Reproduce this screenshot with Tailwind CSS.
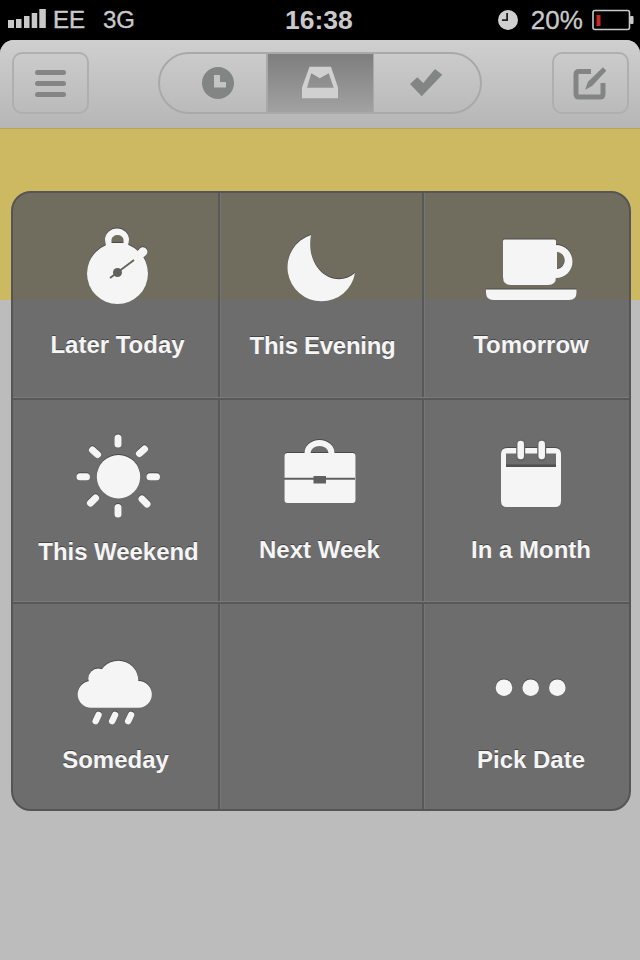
<!DOCTYPE html>
<html>
<head>
<meta charset="utf-8">
<script src="https://cdn.jsdelivr.net/npm/@tailwindcss/browser@4"></script>
</head>
<body class="m-0 bg-black">
<div class="relative w-[640px] h-[960px] overflow-hidden bg-black font-['Liberation_Sans',sans-serif]">
  <!-- status bar -->
  <div class="h-10 flex items-center text-[#c9c9c9]">
    <svg class="ml-2 mt-[-1px]" width="38" height="22" viewBox="8 9 38 22" fill="#c9c9c9"><rect x="8" y="20" width="6" height="8"/><rect x="16" y="19" width="5.500" height="9"/><rect x="24" y="16" width="5.500" height="12"/><rect x="31.700" y="13" width="5.500" height="15"/><rect x="39.300" y="9" width="6.500" height="19"/></svg>
    <span class="ml-[7px] text-[24px] leading-none [-webkit-text-stroke:0.5px_#c9c9c9]">EE</span>
    <span class="ml-[18px] text-[24px] leading-none [-webkit-text-stroke:0.3px_#c9c9c9]">3G</span>
    <span class="ml-[150px] text-[26.500px] font-bold leading-none">16:38</span>
    <svg class="ml-[145px]" width="21" height="21" viewBox="498 9 21 21"><circle cx="508" cy="19" r="10" fill="#d0d0d0"/><path d="M508 12v8h-6v-1.800h4.200V12z" fill="#222"/></svg>
    <span class="ml-[12px] text-[26px] leading-none [-webkit-text-stroke:0.3px_#c9c9c9]">20%</span>
    <svg class="ml-[9px]" width="42" height="22" viewBox="592 8 42 22"><rect x="593" y="9.500" width="36.500" height="19" rx="2" fill="none" stroke="#c9c9c9" stroke-width="1.600"/><rect x="596.500" y="14" width="4" height="11" fill="#c8281e"/><rect x="630" y="15" width="3.500" height="8" rx="1" fill="#c9c9c9"/></svg>
  </div>
  <!-- page -->
  <div class="h-[920px] rounded-t-[14px] overflow-hidden bg-[#bcbcbc]">
    <div class="h-[88px] pl-3 pr-[11px] pb-[2px] flex items-center justify-between bg-gradient-to-b from-[#cfcfcf] to-[#b6b6b6]">
      <div class="w-[77px] h-[62px] rounded-[10px] border-2 border-[#afafaf] flex flex-col items-center justify-center gap-[6px]">
        <div class="w-[31px] h-[5px] rounded-full bg-[#858585]"></div>
        <div class="w-[31px] h-[5px] rounded-full bg-[#858585]"></div>
        <div class="w-[31px] h-[5px] rounded-full bg-[#858585]"></div>
      </div>
      <div class="w-[324px] h-[62px] ml-[-2px] rounded-full border-2 border-[#a9a9a9] overflow-hidden flex">
        <div class="w-[106px] flex items-center justify-center pl-[10px]">
          <svg width="34" height="34" viewBox="201 67 34 34"><circle cx="218" cy="84" r="16" fill="#838584"/><path d="M214 76h6v7h6v5.500h-12z" fill="#c4c4c4"/></svg>
        </div>
        <div class="w-[108px] flex items-center justify-center bg-gradient-to-b from-[#7e7e7e] to-[#a2a2a2] border-l-2 border-r border-x-[#a9a9a9]">
          <svg width="38" height="34" viewBox="301 68 38 34"><path fill-rule="evenodd" d="M309.500 68.700H331L338 89.500V100.300H302V89.500ZM311.300 75.300L307 89.700H333.700L328.700 75.300L319.800 80.300Z" fill="#d0d0d0"/></svg>
        </div>
        <div class="flex-1 flex items-center justify-center pr-[2px]">
          <svg width="34" height="30" viewBox="409 70 34 30"><path d="M410 86L417.300 79.300L423.300 85L435 71L442.300 76.700L421.700 98.300Z" fill="#838584"/></svg>
        </div>
      </div>
      <div class="w-[77px] h-[62px] rounded-[10px] border-2 border-[#afafaf] flex items-center justify-center">
        <svg width="36" height="36" viewBox="575 65 36 36"><path d="M593 71.500H581q-3 0-3 3V94q0 3 3 3H602q3 0 3-3V83" fill="none" stroke="#838584" stroke-width="5"/><path d="M587 90L590 81.700L605 67.300L608.300 70.700L594.300 85.700Z" fill="#838584"/></svg>
      </div>
    </div>
    <div class="h-[172px] bg-[#cdb962] border-t border-t-[#b8a552]"></div>
  </div>
  <!-- overlay panel -->
  <div class="absolute left-[11px] top-[191px] w-[620px] h-[620px] rounded-[20px] border-2 border-[#555] bg-[#5f5f5f]/85 overflow-hidden flex flex-col text-[#f5f5f5] font-bold text-[24px] [text-shadow:0_-1px_0_#444]">
    <!-- row 1 -->
    <div class="h-[204px] flex">
      <div class="w-[205px] flex flex-col items-center">
        <svg width="205" height="137" viewBox="13 193 205 137"><g class="drop-shadow-[0_-1px_0_#4a4a4a]"><circle cx="117.500" cy="273.500" r="30.500" fill="#f5f5f5"/><path fill-rule="evenodd" d="M105 240a12 11.500 0 1 1 24 0l-1 6h-22zM111.500 243h12v-3a6 5 0 0 0-12 0z" fill="#f5f5f5"/><path d="M136 252.500l3-3a4.500 4.500 0 1 1 7 5.500l-3.500 3z" fill="#f5f5f5"/></g><path d="M110 278l24-18" stroke="#63625a" stroke-width="1.800"/><circle cx="117.500" cy="272.500" r="4.500" fill="#63625a"/></svg>
        <span class="leading-[30px] translate-x-[2px]">Later Today</span>
      </div>
      <div class="w-[3px] border-l-2 border-[#585858] bg-[#767676]"></div>
      <div class="w-[201px] flex flex-col items-center">
        <svg width="201" height="138" viewBox="221 193 201 138"><path class="drop-shadow-[0_-1px_0_#4a4a4a]" d="M311 235A34 34 0 1 0 355 273C335 290 305 270 311 235Z" fill="#f5f5f5"/></svg>
        <span class="leading-[30px] tracking-[-0.3px] translate-x-[1px]">This Evening</span>
      </div>
      <div class="w-[3px] border-l-2 border-[#585858] bg-[#767676]"></div>
      <div class="w-[204px] flex flex-col items-center">
        <svg width="204" height="137" viewBox="425 193 204 137"><g class="drop-shadow-[0_-1px_0_#4a4a4a]" fill="#f5f5f5"><path fill-rule="evenodd" d="M556 245a16.500 16.500 0 0 1 0 33zM557 251.700v17.300a8.700 8.700 0 0 0 0-17.300z"/><path d="M504.500 239.500h50q1.500 0 1.500 1.500v36q0 8-8 8h-37q-8 0-8-8v-36q0-1.500 1.500-1.500z"/><path d="M486 289.500h90.500v3q0 7.500-7.500 7.500h-75.500q-7.500 0-7.500-7.500z"/></g></svg>
        <span class="leading-[30px] translate-x-[4px]">Tomorrow</span>
      </div>
    </div>
    <div class="h-[3px] shrink-0 border-t border-t-[#7a7a7a] bg-[#585858]"></div>
    <!-- row 2 -->
    <div class="h-[201px] flex">
      <div class="w-[205px] flex flex-col items-center">
        <svg width="205" height="137" viewBox="13 400 205 137"><g class="drop-shadow-[0_-1px_0_#4a4a4a]"><circle cx="118.500" cy="476.700" r="21.700" fill="#f5f5f5"/><path d="M118 438v6M118 507.500v6.500M80 476.700h6.500M150 476.700h6.500M92.500 450l5 4.500M139.500 453.500l5-4.500M90.500 503l5-5M142 499l5 5" stroke="#f5f5f5" stroke-width="7" stroke-linecap="round" fill="none"/></g></svg>
        <span class="leading-[30px] translate-x-[3px] tracking-[-0.05px]">This Weekend</span>
      </div>
      <div class="w-[3px] border-l-2 border-[#585858] bg-[#767676]"></div>
      <div class="w-[201px] flex flex-col items-center">
        <svg width="201" height="135" viewBox="221 400 201 135"><g class="drop-shadow-[0_-1px_0_#4a4a4a]"><path fill-rule="evenodd" d="M304.500 453a15 13 0 0 1 30 0h18q3 0 3 3v44q0 3-3 3h-65q-3 0-3-3v-44q0-3 3-3zM310.500 453h18a9 7 0 0 0-18 0z" fill="#f5f5f5"/></g><path d="M284 478.700h71" stroke="#606060" stroke-width="2"/><rect x="313.500" y="476" width="12.500" height="7.500" fill="#606060"/></svg>
        <span class="leading-[30px] translate-x-[-2px]">Next Week</span>
      </div>
      <div class="w-[3px] border-l-2 border-[#585858] bg-[#767676]"></div>
      <div class="w-[204px] flex flex-col items-center">
        <svg width="204" height="135" viewBox="425 400 204 135"><g class="drop-shadow-[0_-1px_0_#4a4a4a]"><path fill-rule="evenodd" d="M507 448h48q6 0 6 6v47q0 6-6 6h-48q-6 0-6-6v-47q0-6 6-6zM506 453.500v12h50v-12z" fill="#f5f5f5"/></g><rect x="506" y="465" width="50" height="2" fill="#505050"/><path d="M520.700 444v13M541.700 444v13" stroke="#636363" stroke-width="9" stroke-linecap="round"/><path d="M520.700 444v12M541.700 444v12" stroke="#f5f5f5" stroke-width="6.500" stroke-linecap="round"/></svg>
        <span class="leading-[30px] translate-x-[4px]">In a Month</span>
      </div>
    </div>
    <div class="h-[3px] shrink-0 border-t border-t-[#7a7a7a] bg-[#585858]"></div>
    <!-- row 3 -->
    <div class="h-[205px] flex">
      <div class="w-[205px] flex flex-col items-center">
        <svg width="205" height="141" viewBox="13 604 205 141"><g class="drop-shadow-[0_-1px_0_#4a4a4a]" fill="#f5f5f5"><circle cx="118.300" cy="680.700" r="20"/><circle cx="98.300" cy="678.500" r="10"/><path d="M91 681h47.500a13.300 13.300 0 0 1 0 26.700H91A13.300 13.300 0 0 1 91 681z"/></g><path class="drop-shadow-[0_-1px_0_#4a4a4a]" d="M98.500 715l-2.800 6M115 715l-2.800 6M131 715l-2.800 6" stroke="#f5f5f5" stroke-width="6.500" stroke-linecap="round"/></svg>
        <span class="leading-[30px]">Someday</span>
      </div>
      <div class="w-[3px] border-l-2 border-[#585858] bg-[#767676]"></div>
      <div class="w-[201px]"></div>
      <div class="w-[3px] border-l-2 border-[#585858] bg-[#767676]"></div>
      <div class="w-[204px] flex flex-col items-center">
        <svg width="204" height="141" viewBox="425 604 204 141"><g class="drop-shadow-[0_-1px_0_#4a4a4a]" fill="#f5f5f5"><circle cx="504" cy="687.700" r="8.300"/><circle cx="530.700" cy="687.700" r="8.300"/><circle cx="557.300" cy="687.700" r="8.300"/></g></svg>
        <span class="leading-[30px] translate-x-[4px]">Pick Date</span>
      </div>
    </div>
  </div>
</div>
</body>
</html>
